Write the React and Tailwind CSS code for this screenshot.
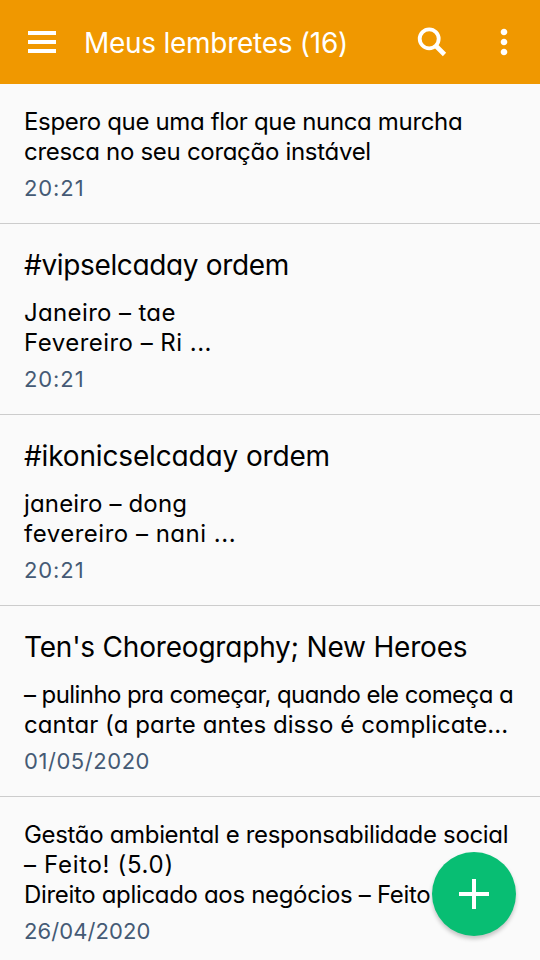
import { MdMoreVert } from 'react-icons/md';

const notes = [
  {
    id: 1,
    lines: [
      { text: 'Espero que uma flor que nunca murcha', tracking: 'tracking-[-0.34px]' },
      { text: 'cresca no seu coração instável', tracking: 'tracking-[-0.3px]' },
    ],
    date: '20:21',
    dateTracking: 'tracking-[0.9px]',
  },
  {
    id: 2,
    title: '#vipselcaday ordem',
    titleTracking: 'tracking-[-0.35px]',
    lines: [
      { text: 'Janeiro – tae', tracking: 'tracking-[0.35px]' },
      { text: 'Fevereiro – Ri ...', tracking: 'tracking-[0.47px]' },
    ],
    date: '20:21',
    dateTracking: 'tracking-[0.9px]',
  },
  {
    id: 3,
    title: '#ikonicselcaday ordem',
    titleTracking: 'tracking-[-0.15px]',
    lines: [
      { text: 'janeiro – dong', tracking: 'tracking-[0.15px]' },
      { text: 'fevereiro – nani ...', tracking: 'tracking-[0.5px]' },
    ],
    date: '20:21',
    dateTracking: 'tracking-[0.9px]',
  },
  {
    id: 4,
    title: "Ten's Choreography; New Heroes",
    titleTracking: 'tracking-[-0.2px]',
    lines: [
      { text: '– pulinho pra começar, quando ele começa a', tracking: 'tracking-[-0.58px]' },
      { text: 'cantar (a parte antes disso é complicate...', tracking: 'tracking-[0.06px]' },
    ],
    date: '01/05/2020',
    dateTracking: 'tracking-[0.55px]',
  },
  {
    id: 5,
    lines: [
      { text: 'Gestão ambiental e responsabilidade social', tracking: 'tracking-[-0.33px]' },
      { text: '– Feito! (5.0)', tracking: 'tracking-[0.68px]' },
      { text: 'Direito aplicado aos negócios – Feito', tracking: 'tracking-[-0.33px]' },
    ],
    date: '26/04/2020',
    dateTracking: 'tracking-[0.08px]',
  },
];

function Header() {
  return (
    <header className="flex h-[84px] shrink-0 items-center bg-[#f09800] pl-7 pr-4 text-white">
      <button aria-label="Menu">
        <svg width="28" height="22" viewBox="0 0 28 22" fill="currentColor">
          <path d="M0 0h28v4H0zM0 9h28v4H0zM0 18h28v4H0z" />
        </svg>
      </button>
      <h1 className="ml-7 flex-1 whitespace-nowrap pt-0.5 text-[28px] leading-9 tracking-[-0.27px]">
        Meus lembretes (16)
      </h1>
      <button aria-label="Buscar" className="mr-8">
        <svg width="40" height="40" viewBox="0 0 40 40" fill="none" stroke="currentColor">
          <circle cx="17.2" cy="16.8" r="9.5" strokeWidth="3.8" />
          <path d="M23.5 23.5l9 9" strokeWidth="4.6" />
        </svg>
      </button>
      <button aria-label="Mais">
        <MdMoreVert size={40} />
      </button>
    </header>
  );
}

function NoteItem({ note }) {
  return (
    <li className="border-b border-[#cccccc] px-6 pt-[23px] pb-5">
      {note.title && (
        <h2 className={`mb-[15px] whitespace-nowrap text-[28px] leading-9 ${note.titleTracking}`}>
          {note.title}
        </h2>
      )}
      {note.lines.map((line) => (
        <p key={line.text} className={`whitespace-nowrap text-2xl leading-[30px] ${line.tracking}`}>
          {line.text}
        </p>
      ))}
      <p className={`mt-1.5 text-[22px] leading-[30px] text-[#455a75] ${note.dateTracking}`}>
        {note.date}
      </p>
    </li>
  );
}

export default function App() {
  return (
    <div className="relative flex h-[960px] w-[540px] flex-col overflow-hidden bg-[#fafafa] font-['Inter',sans-serif] text-black [font-feature-settings:'cv11']">
      <Header />
      <ul>
        {notes.map((note) => (
          <NoteItem key={note.id} note={note} />
        ))}
      </ul>
      <button
        aria-label="Adicionar"
        className="absolute right-6 bottom-6 flex size-[84px] items-center justify-center rounded-full bg-[#08be73] text-white shadow-[0_3px_4px_rgba(0,0,0,0.22)]"
      >
        <svg width="30" height="30" viewBox="0 0 30 30" fill="currentColor">
          <path d="M13 0h4v13h13v4H17v13h-4V17H0v-4h13z" />
        </svg>
      </button>
    </div>
  );
}
